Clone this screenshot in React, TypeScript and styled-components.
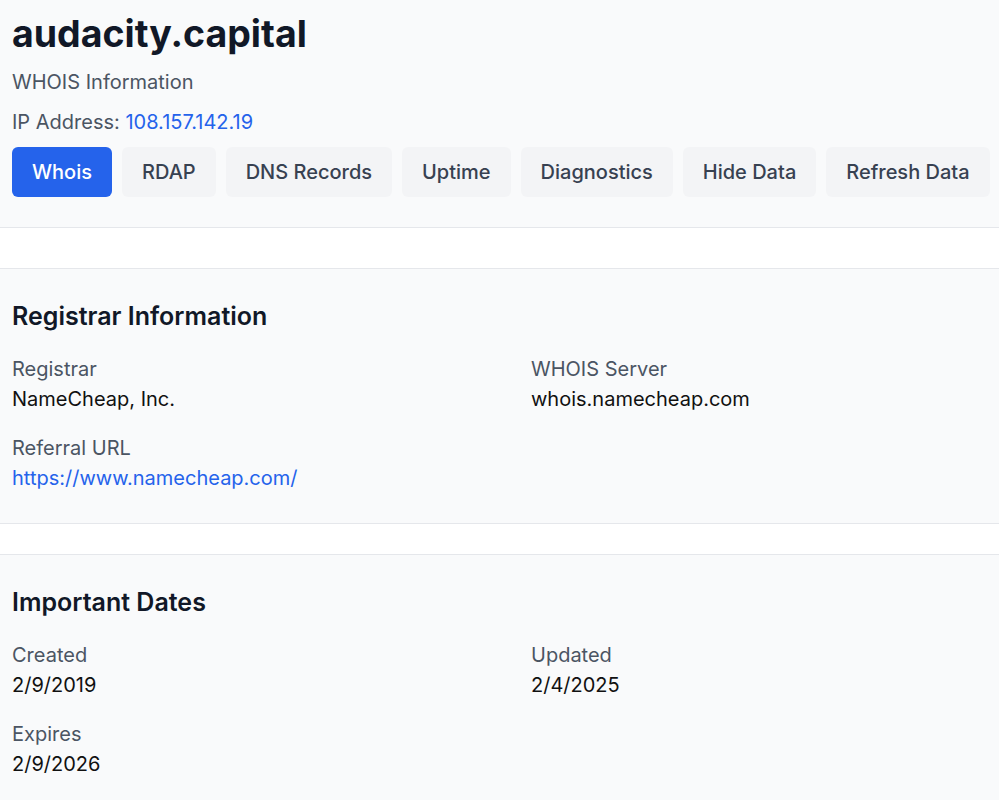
import React, { useState } from 'react'
import styled, { createGlobalStyle } from 'styled-components'

const GlobalStyle = createGlobalStyle`
  body {
    margin: 0;
    background: #ffffff;
    font-family: Inter, "Noto Sans", "Liberation Sans", sans-serif;
    color: #111827;
  }
  * { box-sizing: border-box; }
`

const Header = styled.header`
  background: #f9fafb;
  border-bottom: 1px solid #e5e7eb;
  padding: 14px 12px 30px;
  margin-bottom: 40px;
`

const DomainTitle = styled.h1`
  margin: 0;
  font-size: 37.5px;
  line-height: 40px;
  font-weight: 700;
  color: #111827;
`

const SubTitle = styled.p`
  margin: 14px 0 0;
  font-size: 20px;
  line-height: 28px;
  color: #4b5563;
`

const IpLine = styled.p`
  margin: 12px 0 0;
  font-size: 20px;
  line-height: 28px;
  color: #4b5563;
`

const Link = styled.a`
  color: #2563eb;
  text-decoration: none;
`

const Tabs = styled.nav`
  display: flex;
  gap: 10px;
  margin-top: 11px;
`

const TabButton = styled.button<{ $active?: boolean }>`
  flex-shrink: 0;
  white-space: nowrap;
  border: none;
  border-radius: 6px;
  padding: 11px 20px;
  font-family: inherit;
  font-size: 20px;
  line-height: 28px;
  font-weight: 500;
  cursor: pointer;
  background: ${(p) => (p.$active ? '#2563eb' : '#f3f4f6')};
  color: ${(p) => (p.$active ? '#ffffff' : '#374151')};
`

const Section = styled.section`
  background: #f9fafb;
  border-top: 1px solid #e5e7eb;
  border-bottom: 1px solid #e5e7eb;
  padding: 31px 12px 31px;

  & + & {
    margin-top: 30px;
  }
`

const SectionTitle = styled.h2`
  margin: 0 0 23px;
  font-size: 25px;
  line-height: 32px;
  font-weight: 600;
  color: #111827;
`

const FieldGrid = styled.div`
  display: grid;
  grid-template-columns: 1fr 1fr;
  column-gap: 63px;
  row-gap: 21px;
`

const Field = styled.div`
  display: flex;
  flex-direction: column;
  gap: 2px;
`

const Label = styled.span`
  font-size: 20px;
  line-height: 28px;
  color: #4b5563;
`

const Value = styled.span<{ $link?: boolean }>`
  font-size: 20px;
  line-height: 28px;
  font-weight: 400;
  color: ${(p) => (p.$link ? '#2563eb' : '#111111')};
  text-decoration: none;
`

const tabs = ['Whois', 'RDAP', 'DNS Records', 'Uptime', 'Diagnostics', 'Hide Data', 'Refresh Data']

type Item = { label: string; value: string; href?: string }

const sections: { title: string; items: Item[] }[] = [
  {
    title: 'Registrar Information',
    items: [
      { label: 'Registrar', value: 'NameCheap, Inc.' },
      { label: 'WHOIS Server', value: 'whois.namecheap.com' },
      { label: 'Referral URL', value: 'https://www.namecheap.com/', href: 'https://www.namecheap.com/' },
    ],
  },
  {
    title: 'Important Dates',
    items: [
      { label: 'Created', value: '2/9/2019' },
      { label: 'Updated', value: '2/4/2025' },
      { label: 'Expires', value: '2/9/2026' },
    ],
  },
]

function App() {
  const [active, setActive] = useState('Whois')

  return (
    <>
      <GlobalStyle />
      <Header>
        <DomainTitle>audacity.capital</DomainTitle>
        <SubTitle>WHOIS Information</SubTitle>
        <IpLine>
          IP Address: <Link href="#">108.157.142.19</Link>
        </IpLine>
        <Tabs>
          {tabs.map((t) => (
            <TabButton key={t} $active={t === active} onClick={() => setActive(t)}>
              {t}
            </TabButton>
          ))}
        </Tabs>
      </Header>

      {sections.map((s) => (
        <Section key={s.title}>
          <SectionTitle>{s.title}</SectionTitle>
          <FieldGrid>
            {s.items.map((it) => (
              <Field key={it.label}>
                <Label>{it.label}</Label>
                {it.href ? (
                  <Value as="a" href={it.href} $link>
                    {it.value}
                  </Value>
                ) : (
                  <Value>{it.value}</Value>
                )}
              </Field>
            ))}
          </FieldGrid>
        </Section>
      ))}
    </>
  )
}

export default App
